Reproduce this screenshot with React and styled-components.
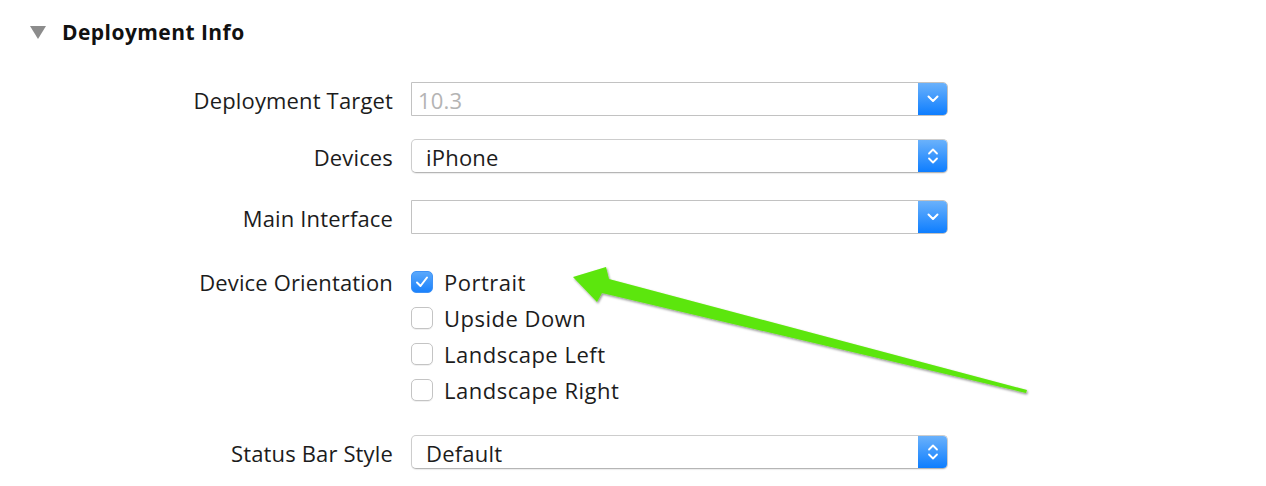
import React from "react";
import styled, { createGlobalStyle } from "styled-components";

const GlobalStyle = createGlobalStyle`
  html, body {
    margin: 0;
    padding: 0;
    background: #ffffff;
    overflow: hidden;
  }
  body {
    font-family: "Open Sans", "Liberation Sans", sans-serif;
    color: #1c1c1c;
  }
`;

const Page = styled.div`
  position: relative;
  width: 1266px;
  height: 486px;
  background: #ffffff;
`;

const Header = styled.div`
  display: flex;
  align-items: center;
  height: 64px;
  padding-left: 30px;
`;

const Disclosure = styled.span`
  width: 0;
  height: 0;
  border-left: 8px solid transparent;
  border-right: 8px solid transparent;
  border-top: 13px solid #8c8c8c;
  margin-right: 16px;
  margin-top: 1px;
`;

const Title = styled.h2`
  margin: 0;
  font-size: 21px;
  font-weight: 700;
  color: #111;
  letter-spacing: 0.45px;
`;

const Form = styled.div`
  display: flex;
  flex-direction: column;
  padding-top: 18px;
`;

const Row = styled.div`
  display: grid;
  grid-template-columns: 393px 537px;
  column-gap: 18px;
  align-items: ${(p) => (p.$top ? "start" : "center")};
  margin-top: ${(p) => p.$gap || 0}px;
`;

const Label = styled.div`
  text-align: right;
  font-size: 22px;
  letter-spacing: 0.15px;
  line-height: ${(p) => (p.$top ? "36px" : "32px")};
  padding-top: ${(p) => (p.$top ? "0" : "2px")};
  color: #1c1c1c;
  white-space: nowrap;
`;

const Field = styled.div`
  display: flex;
  height: 34px;
  box-sizing: border-box;
  background: #fff;
  border: 1px solid ${(p) => (p.$popup ? "#cdcdcd" : "#c2c2c2")};
  border-bottom-color: ${(p) => (p.$popup ? "#b5b5b5" : "#c2c2c2")};
  border-radius: ${(p) => (p.$popup ? "5px" : "0 5px 5px 0")};
  box-shadow: ${(p) => (p.$popup ? "0 1px 1px rgba(0,0,0,0.08)" : "none")};
  overflow: hidden;
`;

const Value = styled.div`
  flex: 1;
  display: flex;
  align-items: center;
  padding-left: ${(p) => (p.$popup ? "14px" : "6px")};
  padding-top: 1px;
  font-size: 22px;
  letter-spacing: 0.2px;
  color: ${(p) => (p.$muted ? "#b4b4b4" : "#1c1c1c")};
`;

const BlueButton = styled.div`
  width: 30px;
  flex: none;
  display: flex;
  align-items: center;
  justify-content: center;
  margin: -1px -1px -1px 0;
  background: linear-gradient(#6db3fb, #0b7cff);
  border-radius: 0 5px 5px 0;
`;

const Options = styled.div`
  display: flex;
  flex-direction: column;
`;

const Option = styled.label`
  display: flex;
  align-items: center;
  height: 36px;
  font-size: 22px;
  letter-spacing: 0.5px;
  color: #1c1c1c;
`;

const Box = styled.span`
  width: 22px;
  height: 22px;
  box-sizing: border-box;
  border-radius: 5px;
  margin-right: 11px;
  display: flex;
  align-items: center;
  justify-content: center;
  border: 1px solid ${(p) => (p.$checked ? "#3f93f7" : "#c4c4c4")};
  background: ${(p) => (p.$checked ? "linear-gradient(#5aa8fb, #1b82fc)" : "#fff")};
  box-shadow: ${(p) => (p.$checked ? "none" : "0 1px 0 rgba(0,0,0,0.06)")};
`;

const Overlay = styled.svg`
  position: absolute;
  left: 0;
  top: 0;
  pointer-events: none;
`;

const ChevronDown = () => (
  <svg width="12" height="8" viewBox="0 0 12 8">
    <path d="M1.5 1.5 L6 6 L10.5 1.5" fill="none" stroke="#fff" strokeWidth="2" strokeLinecap="round" strokeLinejoin="round" />
  </svg>
);

const ChevronUpDown = () => (
  <svg width="12" height="18" viewBox="0 0 12 18">
    <path d="M2 6.5 L6 2.5 L10 6.5" fill="none" stroke="#fff" strokeWidth="1.8" strokeLinecap="round" strokeLinejoin="round" />
    <path d="M2 11.5 L6 15.5 L10 11.5" fill="none" stroke="#fff" strokeWidth="1.8" strokeLinecap="round" strokeLinejoin="round" />
  </svg>
);

const Check = () => (
  <svg width="14" height="12" viewBox="0 0 14 12">
    <path d="M2 6.5 L5.5 10 L12 1.5" fill="none" stroke="#fff" strokeWidth="2" strokeLinecap="round" strokeLinejoin="round" />
  </svg>
);

const Select = ({ value, popup, muted }) => (
  <Field $popup={popup}>
    <Value $popup={popup} $muted={muted}>{value}</Value>
    <BlueButton>{popup ? <ChevronUpDown /> : <ChevronDown />}</BlueButton>
  </Field>
);

const orientations = [
  { name: "Portrait", checked: true },
  { name: "Upside Down", checked: false },
  { name: "Landscape Left", checked: false },
  { name: "Landscape Right", checked: false },
];

export default function App() {
  return (
    <Page>
      <GlobalStyle />
      <Header>
        <Disclosure />
        <Title>Deployment Info</Title>
      </Header>
      <Form>
        <Row>
          <Label>Deployment Target</Label>
          <Select value="10.3" muted />
        </Row>
        <Row $gap={23}>
          <Label>Devices</Label>
          <Select value="iPhone" popup />
        </Row>
        <Row $gap={27}>
          <Label>Main Interface</Label>
          <Select value="" />
        </Row>
        <Row $gap={30} $top>
          <Label $top>Device Orientation</Label>
          <Options>
            {orientations.map((o) => (
              <Option key={o.name}>
                <Box $checked={o.checked}>{o.checked && <Check />}</Box>
                {o.name}
              </Option>
            ))}
          </Options>
        </Row>
        <Row $gap={27}>
          <Label>Status Bar Style</Label>
          <Select value="Default" popup />
        </Row>
      </Form>
      <Overlay width="1266" height="486" viewBox="0 0 1266 486">
        <defs>
          <filter id="arrowShadow" x="-10%" y="-10%" width="120%" height="130%">
            <feDropShadow dx="1" dy="1.5" stdDeviation="1" floodColor="#000" floodOpacity="0.45" />
          </filter>
        </defs>
        <polygon
          points="573,277 606,267 609,279 1027,390 1026,393 602,293 597,302"
          fill="#5ce60a"
          filter="url(#arrowShadow)"
        />
      </Overlay>
    </Page>
  );
}
